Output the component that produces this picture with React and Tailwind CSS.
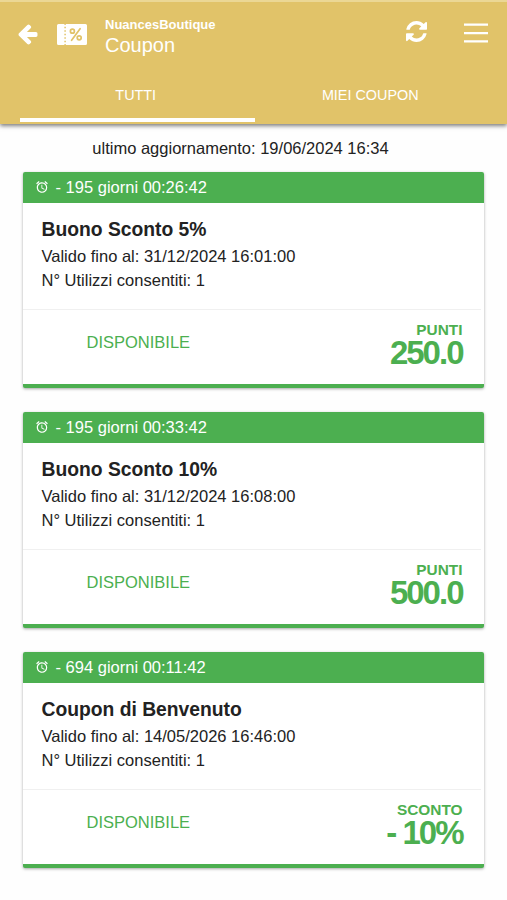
import React, { useState } from "react";
import { MdAlarm } from "react-icons/md";

const TABS = [
  { id: "all", label: "TUTTI" },
  { id: "mine", label: "MIEI COUPON" },
];

const COUPONS = [
  {
    id: 1,
    countdown: "195 giorni 00:26:42",
    title: "Buono Sconto 5%",
    validUntil: "31/12/2024 16:01:00",
    uses: 1,
    kind: "PUNTI",
    value: "250.0",
  },
  {
    id: 2,
    countdown: "195 giorni 00:33:42",
    title: "Buono Sconto 10%",
    validUntil: "31/12/2024 16:08:00",
    uses: 1,
    kind: "PUNTI",
    value: "500.0",
  },
  {
    id: 3,
    countdown: "694 giorni 00:11:42",
    title: "Coupon di Benvenuto",
    validUntil: "14/05/2026 16:46:00",
    uses: 1,
    kind: "SCONTO",
    value: "- 10%",
  },
];

const BackIcon = () => (
  <svg viewBox="64 143 1472 1630" className="h-[21px] w-[20px]" fill="currentColor">
    <path d="M1536 896v128q0 53-32.5 90.5t-84.5 37.5h-704l293 294q38 36 38 90t-38 90l-75 76q-37 37-90 37-52 0-91-37l-651-652q-37-37-37-90 0-52 37-91l651-650q38-38 91-38 52 0 90 38l75 74q38 38 38 91t-38 91l-293 293h704q52 0 84.5 37.5t32.5 90.5z" />
  </svg>
);

const RefreshIcon = () => (
  <svg viewBox="0 0 1536 1536" className="size-[21px]" fill="currentColor">
    <path d="M1511 928q0 5-1 7-64 268-268 434.5T764 1536q-146 0-282.5-55T238 1324l-129 129q-19 19-45 19t-45-19-19-45V960q0-26 19-45t45-19h448q26 0 45 19t19 45-19 45l-137 137q71 66 161 102t187 36q134 0 250-65t186-179q11-17 53-117 8-23 30-23h192q13 0 22.5 9.5t9.5 22.5zm25-800v448q0 26-19 45t-45 19h-448q-26 0-45-19t-19-45 19-45l138-138Q969 256 768 256q-134 0-250 65T332 500q-11 17-53 117-8 23-30 23H50q-13 0-22.5-9.5T18 608v-7q65-268 270-434.5T768 0q146 0 284 55.5T1297 212l130-129q19-19 45-19t45 19 19 45z" />
  </svg>
);

const TicketIcon = () => (
  <svg viewBox="0 0 30 21" className="h-[21px] w-[30px]" fill="none">
    <path
      fill="currentColor"
      d="M1.5 0H7.2a.9.9 0 0 0 1.8 0H28.5A1.5 1.5 0 0 1 30 1.500V19.500A1.5 1.5 0 0 1 28.500 21H9a.9.9 0 0 0-1.800 0H1.500A1.500 1.500 0 0 1 0 19.500V1.500A1.500 1.500 0 0 1 1.500 0Z"
    />
    <path d="M8.100 2.700V19" stroke="#e1c369" strokeWidth="1.500" strokeDasharray="1.600 1.900" />
    <g stroke="#e1c369" strokeWidth="1.700">
      <path d="M23.100 4.700L14.600 16.300" strokeLinecap="round" />
      <circle cx="15.400" cy="7.200" r="2" />
      <circle cx="22.200" cy="13.800" r="2" />
    </g>
  </svg>
);

const MenuIcon = () => (
  <svg viewBox="0 0 24 20" className="h-5 w-6" fill="currentColor">
    <path d="M0 .4h24v2.300H0zM0 8.900h24v2.300H0zM0 17.300h24v2.300H0z" />
  </svg>
);

const CouponCard = ({ coupon }) => {
  return (
    <article className="flex h-[216px] flex-col overflow-hidden rounded-[2px] border-b-4 border-[#4caf50] bg-white shadow-[0_1px_3px_rgba(0,0,0,0.35)]">
      <div className="flex h-[31px] items-center bg-[#4caf50] pb-px pl-3 text-white">
        <MdAlarm size={14} className="mr-[7px]" />
        <span>- {coupon.countdown}</span>
      </div>

      <div className="h-[106px] px-[19px] pt-3 leading-6">
        <h2 className="text-[19.3px] leading-[29px] font-bold">{coupon.title}</h2>
        <p>Valido fino al: {coupon.validUntil}</p>
        <p>N° Utilizzi consentiti: {coupon.uses}</p>
      </div>

      <div className="mr-[3px] flex flex-1 justify-between border-t border-[#f0f0f0] text-[#4caf50]">
        <span className="pt-5 pl-[64px] leading-6">DISPONIBILE</span>
        <div className="pt-[11px] pr-[18px] text-right font-bold">
          <p className="text-[15.4px] leading-[18px]">{coupon.kind}</p>
          <p className="text-[33px] leading-[28px] tracking-[-2px]">
            {coupon.value}
          </p>
        </div>
      </div>
    </article>
  );
};

const App = () => {
  const [activeTab, setActiveTab] = useState("all");

  return (
    <div className="min-h-[900px] bg-[#fefefe] font-['Liberation_Sans',Arial,sans-serif] text-[16.5px] text-[#222]">
      <header className="h-[124px] border-t-2 border-[#ebd795] bg-[#e1c369] text-white shadow-[0_2px_4px_rgba(0,0,0,0.5)]">
        <div className="flex h-[67px] items-start pr-[19px] pl-[18px]">
          <button type="button" aria-label="Indietro" className="mt-[22px]">
            <BackIcon />
          </button>
          <div className="mt-[22px] ml-[18.5px]">
            <TicketIcon />
          </div>
          <div className="mt-[15px] ml-[18.5px] flex-1">
            <p className="text-[13px] leading-4 font-bold">NuancesBoutique</p>
            <h1 className="text-[20px] leading-6">Coupon</h1>
          </div>
          <button type="button" aria-label="Aggiorna" className="mt-[18.5px]">
            <RefreshIcon />
          </button>
          <button type="button" aria-label="Menu" className="mt-[21px] ml-[37px]">
            <MenuIcon />
          </button>
        </div>

        <nav className="grid h-[53px] grid-cols-2 pr-[18px] pl-5 text-[14.4px]">
          {TABS.map((tab) => (
            <button
              key={tab.id}
              type="button"
              onClick={() => setActiveTab(tab.id)}
              className={`border-b-4 pt-[5px] pr-[3px] ${
                activeTab === tab.id ? "border-white" : "border-transparent"
              }`}
            >
              {tab.label}
            </button>
          ))}
        </nav>
      </header>

      <main className="px-[22.5px] pt-3 pr-[23.5px]">
        <p className="-ml-[25px] h-9 text-center leading-6">
          ultimo aggiornamento: 19/06/2024 16:34
        </p>
        <div className="flex flex-col gap-6">
          {COUPONS.map((coupon) => (
            <CouponCard key={coupon.id} coupon={coupon} />
          ))}
        </div>
      </main>
    </div>
  );
};

export default App;
